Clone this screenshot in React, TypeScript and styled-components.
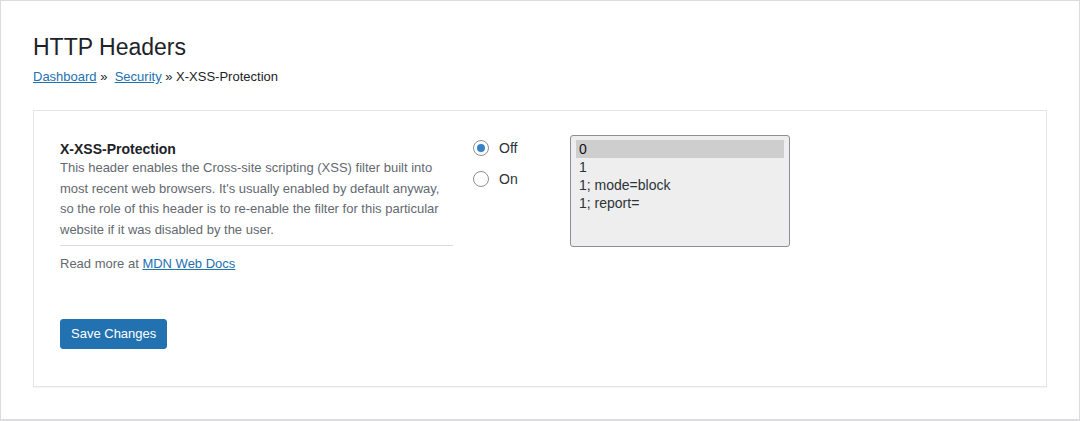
import styled, { createGlobalStyle } from "styled-components"

const GlobalStyle = createGlobalStyle`
html, body {
    margin: 0;
    padding: 0;
    background: #fff;
}
body {
    font-family: "Liberation Sans", Arial, sans-serif;
    color: #1d2327;
}
`

const Wrap = styled.div`
box-sizing: border-box;
width: 1080px;
height: 421px;
border: 1px solid #dcdcde;
border-bottom-width: 2px;
padding: 31px 32px 0 32px;
background: #fff;
`

const PageTitle = styled.h1`
margin: 0;
font-size: 23px;
font-weight: 400;
line-height: 30px;
color: #1d2327;
`

const Crumbs = styled.nav`
margin-top: 5px;
font-size: 13px;
line-height: 20px;
color: #1d2327;
`

const CrumbLink = styled.a`
color: #2271b1;
text-decoration: underline;
&:hover {
    color: #135e96;
}
`

const Card = styled.section`
box-sizing: border-box;
margin-top: 23px;
height: 277px;
border: 1px solid #e2e4e7;
box-shadow: 0 1px 1px rgba(0, 0, 0, 0.04);
padding: 24px 26px 0 26px;
background: #fff;
`

const Row = styled.div`
display: grid;
grid-template-columns: 393px 77px 220px;
column-gap: 20px;
align-items: start;
`

const FieldInfo = styled.div`
padding-top: 5px;
`

const FieldTitle = styled.h3`
margin: 0;
font-size: 14px;
font-weight: 700;
line-height: 18px;
color: #1d2327;
`

const FieldDesc = styled.p`
margin: 0;
font-size: 13px;
line-height: 20.5px;
color: #646970;
`

const Divider = styled.hr`
margin: 5px 0 8px 0;
border: 0;
border-top: 1px solid #dcdcde;
`

const DocLink = styled.a`
color: #2271b1;
text-decoration: underline;
`

const RadioGroup = styled.div`
display: flex;
flex-direction: column;
gap: 11px;
padding-top: 3px;
`

const RadioLabel = styled.label`
display: flex;
align-items: center;
gap: 10px;
font-size: 14px;
line-height: 20px;
color: #2c3338;
cursor: pointer;
`

const RadioCircle = styled.span<{ $checked: boolean }>`
box-sizing: border-box;
width: 16px;
height: 16px;
border-radius: 50%;
border: 1px solid #8c8f94;
background: #fff;
display: flex;
align-items: center;
justify-content: center;
&::before {
    content: "";
    width: 8px;
    height: 8px;
    border-radius: 50%;
    background: #3582c4;
    display: ${p => (p.$checked ? "block" : "none")};
}
`

const ListBox = styled.ul`
box-sizing: border-box;
margin: 0;
width: 220px;
height: 112px;
padding: 4px 5px;
list-style: none;
border: 1px solid #8c8f94;
border-radius: 3px;
background: #eeeeee;
`

const ListOption = styled.li<{ $selected?: boolean }>`
height: 18px;
line-height: 18px;
padding: 0 3px;
font-size: 14px;
color: ${p => (p.$selected ? "#111" : "#2c3338")};
background: ${p => (p.$selected ? "#cecece" : "transparent")};
`

const Submit = styled.div`
margin-top: 44px;
`

const PrimaryButton = styled.button`
height: 30px;
padding: 0 10px;
border: 1px solid #2271b1;
border-radius: 3px;
background: #2271b1;
color: #fff;
font-family: "Liberation Sans", Arial, sans-serif;
font-size: 13px;
line-height: 28px;
cursor: pointer;
&:hover {
    background: #135e96;
}
`

const options = ["0", "1", "1; mode=block", "1; report="]

export default function App() {
    return (
        <>
            <GlobalStyle />
            <Wrap>
                <PageTitle>HTTP Headers</PageTitle>
                <Crumbs>
                    <CrumbLink href="#">Dashboard</CrumbLink> »&nbsp; <CrumbLink href="#">Security</CrumbLink> » X-XSS-Protection
                </Crumbs>
                <Card>
                    <Row>
                        <FieldInfo>
                            <FieldTitle>X-XSS-Protection</FieldTitle>
                            <FieldDesc>
                                This header enables the Cross-site scripting (XSS) filter built into most recent web browsers. It's usually enabled by default anyway, so the role of this header is to re-enable the filter for this particular website if it was disabled by the user.
                            </FieldDesc>
                            <Divider />
                            <FieldDesc>
                                Read more at <DocLink href="#">MDN Web Docs</DocLink>
                            </FieldDesc>
                        </FieldInfo>
                        <RadioGroup>
                            <RadioLabel>
                                <RadioCircle $checked={true} />
                                Off
                            </RadioLabel>
                            <RadioLabel>
                                <RadioCircle $checked={false} />
                                On
                            </RadioLabel>
                        </RadioGroup>
                        <ListBox role="listbox">
                            {options.map((o, i) => (
                                <ListOption key={o} role="option" $selected={i === 0}>{o}</ListOption>
                            ))}
                        </ListBox>
                    </Row>
                    <Submit>
                        <PrimaryButton type="button">Save Changes</PrimaryButton>
                    </Submit>
                </Card>
            </Wrap>
        </>
    )
}
